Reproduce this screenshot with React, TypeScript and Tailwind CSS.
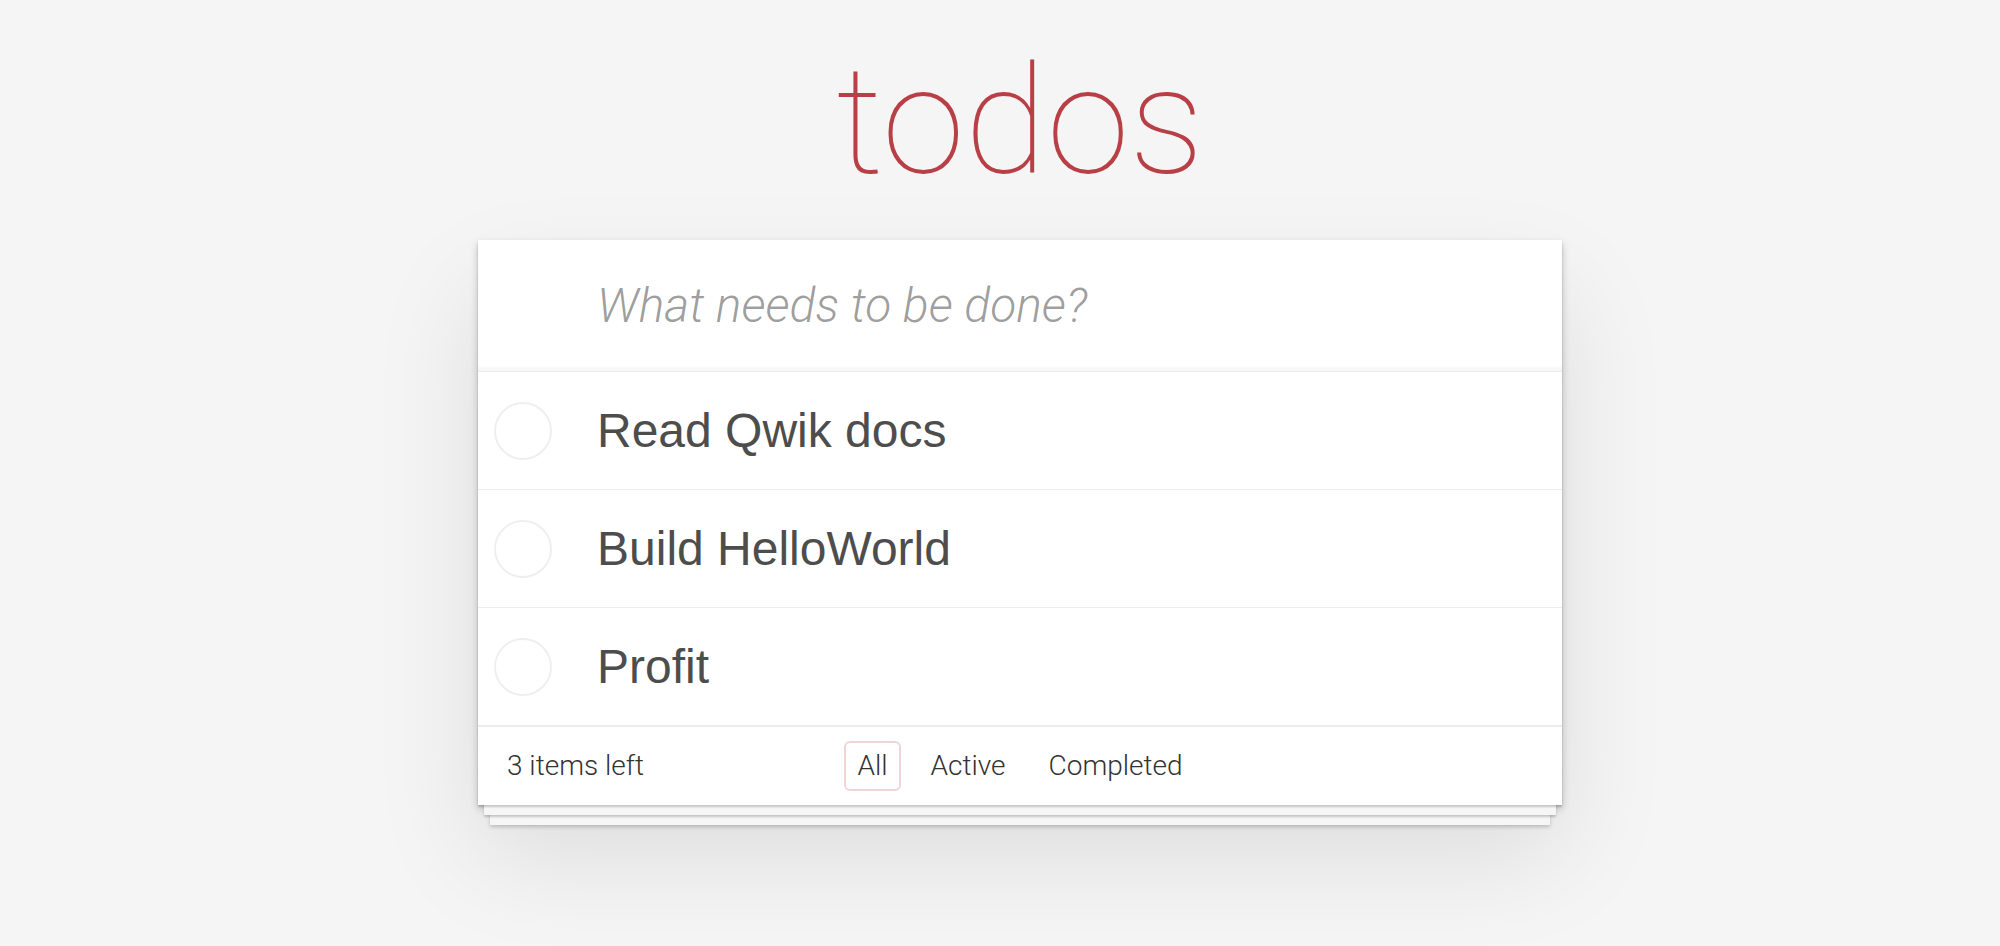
import React, { useState } from 'react';

type Todo = { id: number; text: string; done: boolean };

const initialTodos: Todo[] = [
  { id: 1, text: 'Read Qwik docs', done: false },
  { id: 2, text: 'Build HelloWorld', done: false },
  { id: 3, text: 'Profit', done: false },
];

const filters = ['All', 'Active', 'Completed'];

const App: React.FC = () => {
  const [todos] = useState<Todo[]>(initialTodos);
  const [filter, setFilter] = useState<string>('All');
  const left = todos.filter((t) => !t.done).length;

  return (
    <div className="min-h-screen bg-[#f5f5f5] flex flex-col items-center pl-[40px] font-['Roboto',sans-serif]">
      <h1 className="mt-[32px] h-[208px] text-[150px] leading-[180px] font-thin text-[#b83f45]">
        todos
      </h1>

      <div className="w-[1084px] bg-white shadow-[0_2px_2px_rgba(0,0,0,0.2),0_16px_0_-6px_#f6f6f6,0_18px_2px_-6px_rgba(0,0,0,0.2),0_32px_0_-12px_#f6f6f6,0_34px_4px_-12px_rgba(0,0,0,0.2),0_4px_8px_rgba(0,0,0,0.2),0_50px_100px_rgba(0,0,0,0.1)]">
        <div className="h-[131px] flex items-center shadow-[inset_0_-4px_2px_rgba(0,0,0,0.03)]">
          <input
            className="w-full h-full pl-[119px] pr-8 outline-none bg-transparent text-[48px] text-[#4d4d4d] font-['Roboto',sans-serif] placeholder:italic placeholder:font-light placeholder:text-[rgba(0,0,0,0.4)]"
            placeholder="What needs to be done?"
          />
        </div>

        {todos.map((todo) => (
          <div key={todo.id} className="h-[118px] border-t border-[#ededed] flex items-center">
            <div className="w-[58px] h-[58px] ml-[16px] rounded-full border-2 border-[#efefef]" />
            <span className="ml-[45px] text-[48px] text-[#4d4d4d] font-['Liberation_Sans',sans-serif]">
              {todo.text}
            </span>
          </div>
        ))}

        <div className="h-[80px] border-t-2 border-[#ededed] grid grid-cols-[1fr_auto_1fr] items-center px-[29px] text-[28px] font-light text-[#333333]">
          <span>{left} items left</span>
          <div className="flex items-center gap-[17px]">
            {filters.map((f) => (
              <button
                key={f}
                onClick={() => setFilter(f)}
                className={`h-[50px] px-[11px] flex items-center rounded-[6px] border-2 ${
                  filter === f ? 'border-[rgba(175,47,47,0.2)]' : 'border-transparent'
                }`}
              >
                {f}
              </button>
            ))}
          </div>
          <span />
        </div>
      </div>
    </div>
  );
};

export default App;
